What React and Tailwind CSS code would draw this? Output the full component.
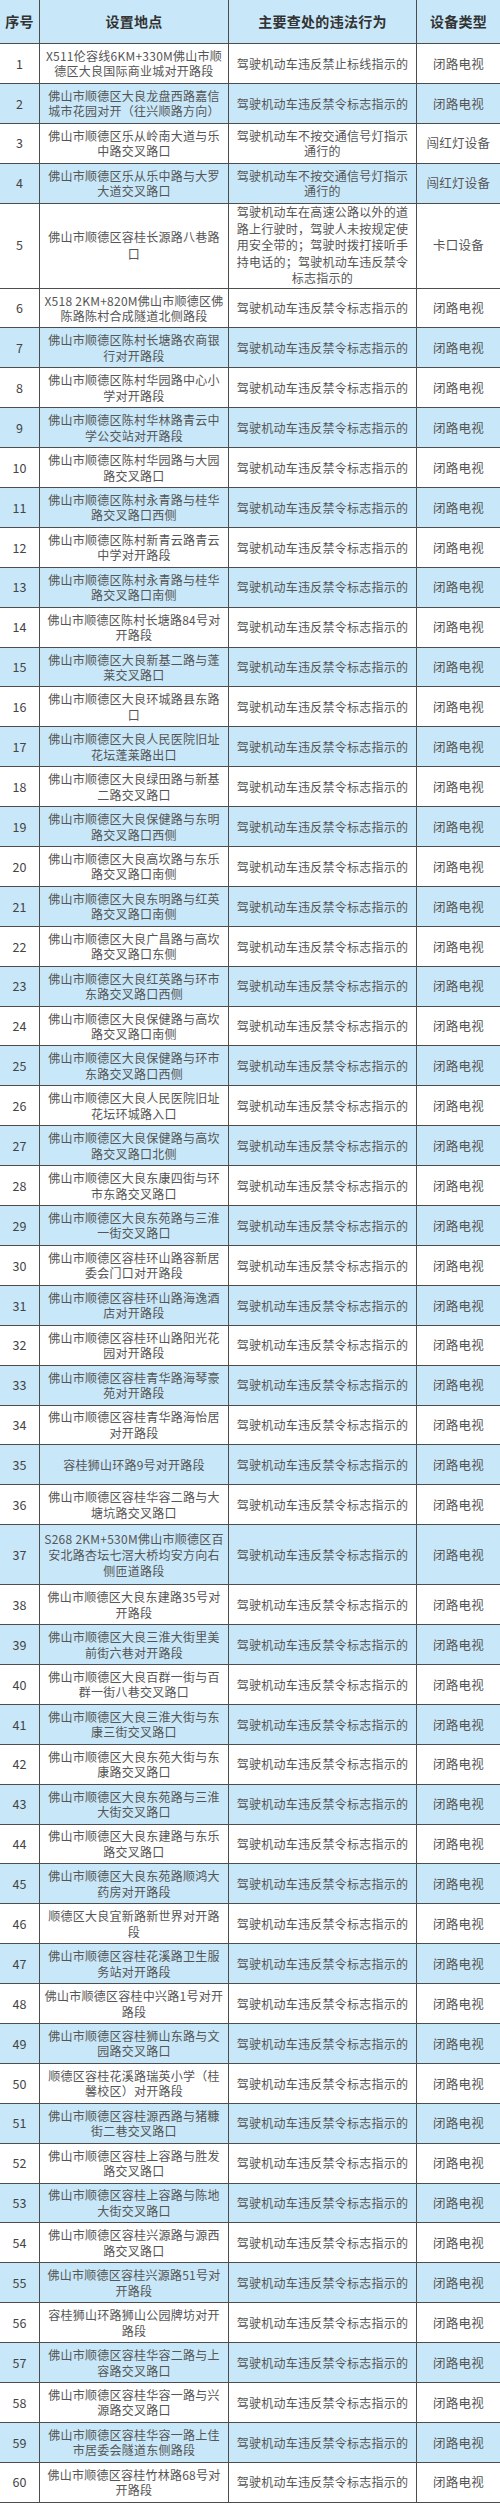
import React from "react";

const A = "驾驶机动车违反禁令标志指示的";
const TV = "闭路电视";

const rows = [
  [["X511伦容线6KM+330M佛山市顺", "德区大良国际商业城对开路段"], ["驾驶机动车违反禁止标线指示的"], TV],
  [["佛山市顺德区大良龙盘西路嘉信", "城市花园对开（往兴顺路方向）"], [A], TV],
  [["佛山市顺德区乐从岭南大道与乐", "中路交叉路口"], ["驾驶机动车不按交通信号灯指示", "通行的"], "闯红灯设备"],
  [["佛山市顺德区乐从乐中路与大罗", "大道交叉路口"], ["驾驶机动车不按交通信号灯指示", "通行的"], "闯红灯设备"],
  [["佛山市顺德区容桂长源路八巷路", "口"], ["驾驶机动车在高速公路以外的道", "路上行驶时，驾驶人未按规定使", "用安全带的；驾驶时拨打接听手", "持电话的；驾驶机动车违反禁令", "标志指示的"], "卡口设备"],
  [["X518 2KM+820M佛山市顺德区佛", "陈路陈村合成隧道北侧路段"], [A], TV],
  [["佛山市顺德区陈村长塘路农商银", "行对开路段"], [A], TV],
  [["佛山市顺德区陈村华园路中心小", "学对开路段"], [A], TV],
  [["佛山市顺德区陈村华林路青云中", "学公交站对开路段"], [A], TV],
  [["佛山市顺德区陈村华园路与大园", "路交叉路口"], [A], TV],
  [["佛山市顺德区陈村永青路与桂华", "路交叉路口西侧"], [A], TV],
  [["佛山市顺德区陈村新青云路青云", "中学对开路段"], [A], TV],
  [["佛山市顺德区陈村永青路与桂华", "路交叉路口南侧"], [A], TV],
  [["佛山市顺德区陈村长塘路84号对", "开路段"], [A], TV],
  [["佛山市顺德区大良新基二路与蓬", "莱交叉路口"], [A], TV],
  [["佛山市顺德区大良环城路县东路", "口"], [A], TV],
  [["佛山市顺德区大良人民医院旧址", "花坛蓬莱路出口"], [A], TV],
  [["佛山市顺德区大良绿田路与新基", "二路交叉路口"], [A], TV],
  [["佛山市顺德区大良保健路与东明", "路交叉路口西侧"], [A], TV],
  [["佛山市顺德区大良高坎路与东乐", "路交叉路口南侧"], [A], TV],
  [["佛山市顺德区大良东明路与红英", "路交叉路口南侧"], [A], TV],
  [["佛山市顺德区大良广昌路与高坎", "路交叉路口东侧"], [A], TV],
  [["佛山市顺德区大良红英路与环市", "东路交叉路口西侧"], [A], TV],
  [["佛山市顺德区大良保健路与高坎", "路交叉路口南侧"], [A], TV],
  [["佛山市顺德区大良保健路与环市", "东路交叉路口西侧"], [A], TV],
  [["佛山市顺德区大良人民医院旧址", "花坛环城路入口"], [A], TV],
  [["佛山市顺德区大良保健路与高坎", "路交叉路口北侧"], [A], TV],
  [["佛山市顺德区大良东康四街与环", "市东路交叉路口"], [A], TV],
  [["佛山市顺德区大良东苑路与三淮", "一街交叉路口"], [A], TV],
  [["佛山市顺德区容桂环山路容新居", "委会门口对开路段"], [A], TV],
  [["佛山市顺德区容桂环山路海逸酒", "店对开路段"], [A], TV],
  [["佛山市顺德区容桂环山路阳光花", "园对开路段"], [A], TV],
  [["佛山市顺德区容桂青华路海琴豪", "苑对开路段"], [A], TV],
  [["佛山市顺德区容桂青华路海怡居", "对开路段"], [A], TV],
  [["容桂狮山环路9号对开路段"], [A], TV],
  [["佛山市顺德区容桂华容二路与大", "塘坑路交叉路口"], [A], TV],
  [["S268 2KM+530M佛山市顺德区百", "安北路杏坛七滘大桥均安方向右", "侧匝道路段"], [A], TV],
  [["佛山市顺德区大良东建路35号对", "开路段"], [A], TV],
  [["佛山市顺德区大良三淮大街里美", "前街六巷对开路段"], [A], TV],
  [["佛山市顺德区大良百群一街与百", "群一街八巷交叉路口"], [A], TV],
  [["佛山市顺德区大良三淮大街与东", "康三街交叉路口"], [A], TV],
  [["佛山市顺德区大良东苑大街与东", "康路交叉路口"], [A], TV],
  [["佛山市顺德区大良东苑路与三淮", "大街交叉路口"], [A], TV],
  [["佛山市顺德区大良东建路与东乐", "路交叉路口"], [A], TV],
  [["佛山市顺德区大良东苑路顺鸿大", "药房对开路段"], [A], TV],
  [["顺德区大良宜新路新世界对开路", "段"], [A], TV],
  [["佛山市顺德区容桂花溪路卫生服", "务站对开路段"], [A], TV],
  [["佛山市顺德区容桂中兴路1号对开", "路段"], [A], TV],
  [["佛山市顺德区容桂狮山东路与文", "园路交叉路口"], [A], TV],
  [["顺德区容桂花溪路瑞英小学（桂", "馨校区）对开路段"], [A], TV],
  [["佛山市顺德区容桂源西路与猪糠", "街二巷交叉路口"], [A], TV],
  [["佛山市顺德区容桂上容路与胜发", "路交叉路口"], [A], TV],
  [["佛山市顺德区容桂上容路与陈地", "大街交叉路口"], [A], TV],
  [["佛山市顺德区容桂兴源路与源西", "路交叉路口"], [A], TV],
  [["佛山市顺德区容桂兴源路51号对", "开路段"], [A], TV],
  [["容桂狮山环路狮山公园牌坊对开", "路段"], [A], TV],
  [["佛山市顺德区容桂华容二路与上", "容路交叉路口"], [A], TV],
  [["佛山市顺德区容桂华容一路与兴", "源路交叉路口"], [A], TV],
  [["佛山市顺德区容桂华容一路上佳", "市居委会隧道东侧路段"], [A], TV],
  [["佛山市顺德区容桂竹林路68号对", "开路段"], [A], TV],
];

function isBlue(n) {
  if (n === 2 || n === 4) return true;
  if (n >= 7 && n % 2 === 1) return true;
  return false;
}

function Lines({ lines }) {
  return (
    <div className="flex flex-col items-center">
      {lines.map((l, i) => (
        <span key={i} className="whitespace-nowrap">
          {l}
        </span>
      ))}
    </div>
  );
}

export default function App() {
  return (
    <div
      className="w-[500px] bg-white text-[#555555]"
      style={{ fontFamily: '"Noto Sans CJK SC", "Noto Sans", sans-serif' }}
    >
      <div className="grid h-[44px] grid-cols-[40px_189px_188px_83px] border-b border-[#4d4d4d] bg-[#c8e8f9] text-[14px] font-bold tracking-[0.3px] text-[#333333]">
        <div className="flex items-center justify-center border-r border-[#4d4d4d]">序号</div>
        <div className="flex items-center justify-center border-r border-[#4d4d4d]">设置地点</div>
        <div className="flex items-center justify-center border-r border-[#4d4d4d]">主要查处的违法行为</div>
        <div className="flex items-center justify-center">设备类型</div>
      </div>
      {rows.map((r, idx) => {
        const n = idx + 1;
        const h = n === 5 ? "h-[85px] leading-[16.6px]" : n === 37 ? "h-[60px] leading-[16px]" : "h-[39.9px] leading-[15.5px]";
        return (
          <div
            key={n}
            className={`grid grid-cols-[40px_189px_188px_83px] border-b border-[#4d4d4d] text-[12px] tracking-[0.25px] ${h} ${
              isBlue(n) ? "bg-[#c8e8f9]" : "bg-white"
            }`}
          >
            <div className="flex items-center justify-center border-r border-[#4d4d4d] text-[12.5px] tracking-normal text-[#444444]">
              {n}
            </div>
            <div className="flex items-center justify-center border-r border-[#4d4d4d] text-center">
              <Lines lines={r[0]} />
            </div>
            <div className="flex items-center justify-center border-r border-[#4d4d4d] text-center">
              <Lines lines={r[1]} />
            </div>
            <div className="flex items-center justify-center text-[12.5px]">{r[2]}</div>
          </div>
        );
      })}
    </div>
  );
}
